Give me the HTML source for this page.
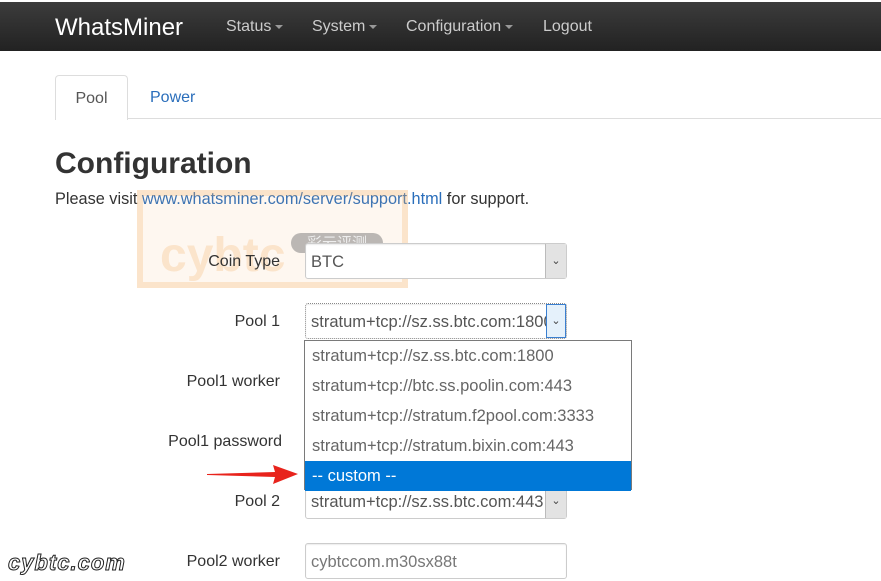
<!DOCTYPE html>
<html><head><meta charset="utf-8"><style>
body{margin:0;width:881px;height:581px;overflow:hidden;background:#fff;font-family:"Liberation Sans",Arial,sans-serif;position:relative;}
.a{position:absolute;}
.nav{left:0;top:2px;width:881px;height:49px;background:linear-gradient(#3c3c3c,#222);}
.nav span{position:absolute;color:#ccc;font-size:16px;top:16px;}
.car{display:inline-block;border-top:4px solid #999;border-left:4px solid transparent;border-right:4px solid transparent;vertical-align:middle;margin-left:4px;}
.lbl{font-size:16px;color:#333;text-align:right;width:200px;left:80px;}
.sel{border:1px solid #ccc;border-radius:3px;background:#fff;box-sizing:border-box;height:36px;box-shadow:inset 0 1px 1px rgba(0,0,0,.075);}
.sel .t{position:absolute;left:5px;top:9px;font-size:16.5px;color:#555;white-space:nowrap;}
.btn{position:absolute;right:0;top:0;width:20px;height:34px;background:#e3e3e3;border-left:1px solid #bbb;text-align:center;font-size:11px;color:#444;line-height:34px;}
.dd{left:304px;top:340px;width:328px;height:150px;border:1px solid #7a7a7a;box-sizing:border-box;background:#fff;}
.dd div{height:30px;line-height:31px;padding-left:7px;font-size:16.5px;color:#666;}
</style></head><body>
<div class="a nav">
<span style="left:55px;top:12px;font-size:24px;color:#fff">WhatsMiner</span>
<span style="left:226px">Status<i class="car"></i></span>
<span style="left:312px">System<i class="car"></i></span>
<span style="left:406px">Configuration<i class="car"></i></span>
<span style="left:543px">Logout</span>
</div>
<div class="a" style="left:55px;top:118px;width:826px;border-top:1px solid #ddd"></div>
<div class="a" style="left:55px;top:75px;width:71px;height:44px;border:1px solid #ddd;border-bottom:none;border-radius:4px 4px 0 0;background:#fff;color:#555;font-size:16px;text-align:center;line-height:46px">Pool</div>
<div class="a" style="left:150px;top:89px;font-size:16px;color:#2a6ebb">Power</div>
<div class="a" style="left:55px;top:147px;font-size:30px;font-weight:bold;color:#333">Configuration</div>
<div class="a" style="left:55px;top:190px;font-size:16.3px;color:#333">Please visit <span style="color:#2a6ebb">www.whatsminer.com/server/support.html</span> for support.</div>
<div class="a" style="left:137px;top:190px;width:271px;height:98px;background:rgba(245,180,110,.1);border:6px solid rgba(245,170,90,.25);box-sizing:border-box"></div>
<div class="a" style="left:160px;top:228px;font-size:48px;font-weight:bold;color:rgba(245,170,90,.25)">cybtc</div>
<div class="a" style="left:291px;top:233px;width:92px;height:20px;border-radius:10px;background:rgba(120,120,120,.5);color:#eee;font-size:15px;text-align:center;line-height:20px;font-family:'Noto Sans CJK SC',sans-serif">彩云评测</div>
<div class="a lbl" style="top:253px">Coin Type</div>
<div class="a sel" style="left:305px;top:243px;width:262px"><span class="t">BTC</span><div class="btn">&#8964;</div></div>
<div class="a lbl" style="top:313px">Pool 1</div>
<div class="a sel" style="left:305px;top:303px;width:262px;border-style:dotted;border-color:#888"><span class="t">stratum+tcp://sz.ss.btc.com:1800</span><div class="btn" style="background:#e5f1fb;border:1px solid #3a7fd0;height:32px;line-height:32px;width:18px">&#8964;</div></div>
<div class="a lbl" style="top:373px">Pool1 worker</div>
<div class="a lbl" style="top:433px;width:202px">Pool1 password</div>
<div class="a lbl" style="top:493px">Pool 2</div>
<div class="a sel" style="left:305px;top:483px;width:262px"><span class="t">stratum+tcp://sz.ss.btc.com:443</span><div class="btn">&#8964;</div></div>
<div class="a lbl" style="top:553px">Pool2 worker</div>
<div class="a sel" style="left:305px;top:543px;width:262px"><span class="t" style="color:#777">cybtccom.m30sx88t</span></div>
<div class="a dd">
<div>stratum+tcp://sz.ss.btc.com:1800</div>
<div>stratum+tcp://btc.ss.poolin.com:443</div>
<div>stratum+tcp://stratum.f2pool.com:3333</div>
<div>stratum+tcp://stratum.bixin.com:443</div>
<div style="background:#0078d7;color:#fff">-- custom --</div>
</div>
<svg class="a" style="left:205px;top:464px" width="95" height="22"><polygon points="2,10 70,8 68,1 93,10 68,20 70,13 2,11" fill="#e8231c"/></svg>
<div class="a" style="left:8px;top:550px;font-size:22px;font-weight:bold;font-style:italic;color:#fff;-webkit-text-stroke:1px #222;letter-spacing:1px">cybtc.com</div>
</body></html>
